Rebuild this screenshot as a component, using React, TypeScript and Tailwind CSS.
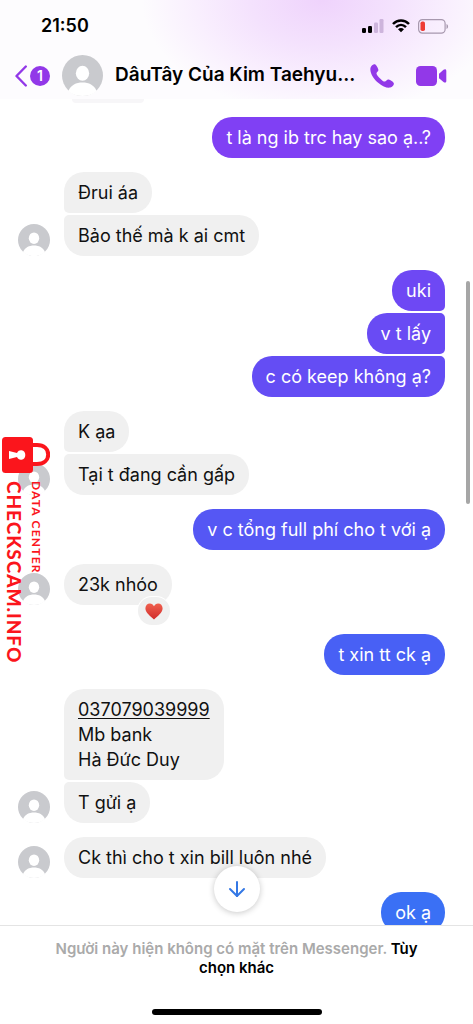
import { ArrowDown } from 'lucide-react';

type Message = {
  text: string;
  link?: string;
  color?: string;
  reaction?: string;
};

type Group = {
  from: 'me' | 'them';
  messages: Message[];
};

const groups: Group[] = [
  {
    from: 'me',
    messages: [{ text: 't là ng ib trc hay sao ạ..?', color: 'bg-[#8040f4]' }],
  },
  {
    from: 'them',
    messages: [{ text: 'Đrui áa' }, { text: 'Bảo thế mà k ai cmt' }],
  },
  {
    from: 'me',
    messages: [
      { text: 'uki', color: 'bg-[#6e48f4]' },
      { text: 'v t lấy', color: 'bg-[#694bf4]' },
      { text: 'c có keep không ạ?', color: 'bg-[#644df4]' },
    ],
  },
  {
    from: 'them',
    messages: [{ text: 'K ạa' }, { text: 'Tại t đang cần gấp' }],
  },
  {
    from: 'me',
    messages: [{ text: 'v c tổng full phí cho t với ạ', color: 'bg-[#5557f4]' }],
  },
  {
    from: 'them',
    messages: [{ text: '23k nhóo', reaction: '❤️' }],
  },
  {
    from: 'me',
    messages: [{ text: 't xin tt ck ạ', color: 'bg-[#4860f5]' }],
  },
  {
    from: 'them',
    messages: [
      { link: '037079039999', text: 'Mb bank\nHà Đức Duy' },
      { text: 'T gửi ạ' },
    ],
  },
  {
    from: 'them',
    messages: [{ text: 'Ck thì cho t xin bill luôn nhé' }],
  },
  {
    from: 'me',
    messages: [{ text: 'ok ạ', color: 'bg-[#3a70f5]' }],
  },
];

const Avatar = ({ className }: { className: string }) => (
  <svg viewBox="0 0 32 32" className={`shrink-0 ${className}`} aria-hidden="true">
    <circle cx="16" cy="16" r="16" fill="#c9cace" />
    <ellipse cx="16" cy="14.200" rx="5.200" ry="5.800" fill="#fff" />
    <path d="M5 28 C7 23.5 11 21.5 16 21.5 C21 21.5 25 23.5 27 28 C24.500 30.700 20.500 32 16 32 C11.500 32 7.500 30.700 5 28Z" fill="#fff" />
  </svg>
);

const StatusBar = () => (
  <div className="flex h-[52px] items-center justify-between pl-[41px] pr-6">
    <span className="text-lg font-semibold">21:50</span>
    <div className="flex items-center gap-2">
      <svg viewBox="0 0 22 14" className="h-[14px] w-[22px]" aria-hidden="true">
        <rect x="0" y="9" width="4" height="5" rx="1.2" fill="#000" />
        <rect x="6" y="7" width="4" height="7" rx="1.2" fill="#000" />
        <rect x="12" y="3.500" width="4" height="10.500" rx="1.200" fill="#cdb4dc" />
        <rect x="17.500" y="0" width="4" height="14" rx="1.200" fill="#cdb4dc" />
      </svg>
      <svg viewBox="0 0 18 14" className="h-[14px] w-[18px]" aria-hidden="true">
        <g fill="none" stroke="#000" strokeWidth="2.500">
          <path d="M1 5 C5.500 .4 12.500 .4 17 5" />
          <path d="M4 8.200 C7 5.300 11 5.300 14 8.200" />
        </g>
        <path d="M6 10.200 C7.800 8.700 10.200 8.700 12 10.200 L9 13.300Z" fill="#000" />
      </svg>
      <svg viewBox="0 0 31 15" className="h-[15px] w-[31px]" aria-hidden="true">
        <rect x=".6" y=".6" width="26.500" height="13.500" rx="3.800" fill="none" stroke="#a798ae" strokeWidth="1.200" />
        <rect x="2.500" y="2.500" width="4.500" height="9.500" rx="1.800" fill="#ee3b35" />
        <path d="M28.500 5 C30.600 5.700 30.600 9.300 28.500 10Z" fill="#a798ae" />
      </svg>
    </div>
  </div>
);

const ChatHeader = () => (
  <header className="h-[99px] shrink-0 bg-[radial-gradient(ellipse_180px_115px_at_68%_0%,#efd3fc,#f4e2fd_40%,#f9effe_70%,#fdfcfe)]">
    <StatusBar />
    <div className="flex h-[47px] items-center pl-[15px] pr-[26px]">
      <button type="button" aria-label="Back" className="flex shrink-0 items-center gap-[3px]">
        <svg viewBox="0 0 12 22" className="h-[22px] w-3" fill="none" stroke="#9238e8" strokeWidth="2.400" strokeLinecap="round" strokeLinejoin="round" aria-hidden="true">
          <path d="M10.800 1.500 L1.500 11 L10.800 20.500" />
        </svg>
        <span className="flex size-5 items-center justify-center rounded-full bg-[#9238e8] text-sm font-semibold text-white">
          1
        </span>
      </button>
      <Avatar className="ml-3 size-[41px]" />
      <h1 className="ml-3 flex-1 whitespace-nowrap text-[19px] font-semibold">
        DâuTây Của Kim Taehyu...
      </h1>
      <button type="button" aria-label="Call" className="shrink-0">
        <svg viewBox="0 0 24 24" className="size-6" aria-hidden="true">
          <path d="M4.900 .3 C3.300 -.2 .6 2.200 .4 4.600 C-.1 9.500 4 15.300 8.500 19 C12.500 22.300 17 24.300 20.200 23.600 C22.500 23.100 24.300 20.700 23.800 19.200 C23.500 18.100 20.200 15.900 18.700 15.600 C16.900 15.200 16.100 17.700 14.700 17.600 C12.600 17.400 6.700 11.600 6.500 9.400 C6.400 8.200 8.600 7.600 8.400 5.900 C8.200 4.400 6.300 .8 4.900 .3Z" fill="#9238e8" />
        </svg>
      </button>
      <button type="button" aria-label="Video call" className="ml-[22px] shrink-0">
        <svg viewBox="0 0 31 20" className="h-5 w-[31px]" fill="#9238e8" aria-hidden="true">
          <rect x="0" y="0" width="21" height="20" rx="4.500" />
          <path d="M23 7.800 L27.500 3.800 C29 2.700 30.300 3.200 30.300 4.800 V15 C30.300 16.600 29 17.100 27.500 16 L23 12.200Z" />
        </svg>
      </button>
    </div>
  </header>
);

// Bubbles of one sender share small corners on the side where they touch
const corners = (from: Group['from'], index: number, count: number) => {
  const first = index === 0;
  const last = index === count - 1;
  if (from === 'me') {
    return `${first ? '' : 'rounded-tr-[5px]'} ${last ? '' : 'rounded-br-[5px]'}`;
  }
  return `${first ? '' : 'rounded-tl-[5px]'} ${last ? '' : 'rounded-bl-[5px]'}`;
};

const MessageGroup = ({ from, messages }: Group) => {
  const mine = from === 'me';
  const reacted = messages.some((message) => message.reaction);

  return (
    <div
      className={`flex items-end gap-[14px] ${mine ? 'justify-end' : ''} ${reacted ? 'mb-[15px]' : ''}`}
    >
      {!mine && <Avatar className="size-8" />}
      <div className={`flex flex-col gap-[2px] ${mine ? 'items-end' : 'items-start'}`}>
        {messages.map((message, index) => (
          <div
            key={message.text}
            className={`relative whitespace-pre-line rounded-[20px] px-[14px] py-2 ${
              mine ? `text-white ${message.color}` : 'bg-[#f0f0f0] text-[#111]'
            } ${corners(from, index, messages.length)}`}
          >
            {message.link && (
              <a href={`tel:${message.link}`} className="block underline underline-offset-2">
                {message.link}
              </a>
            )}
            {message.text}
            {message.reaction && (
              <span className="absolute -bottom-5 right-[2px] flex h-7 w-8 items-center justify-center rounded-full bg-[#f0f0f0] ring-1 ring-white">
                <svg viewBox="0 0 18 17" className="h-[17px] w-[18px]" role="img" aria-label={message.reaction}>
                  <defs>
                    <linearGradient id="heart" x1="0" y1="0" x2="0" y2="1">
                      <stop offset="0" stopColor="#f0604e" />
                      <stop offset="1" stopColor="#d02c2c" />
                    </linearGradient>
                  </defs>
                  <path d="M9 16.600 C5.500 13.200 .4 9.800 .4 5.300 C.4 2.400 2.400 .4 4.900 .4 C6.700 .4 8.200 1.500 9 3.200 C9.800 1.500 11.300 .4 13.100 .4 C15.600 .4 17.600 2.400 17.600 5.300 C17.600 9.800 12.500 13.200 9 16.600Z" fill="url(#heart)" />
                </svg>
              </span>
            )}
          </div>
        ))}
      </div>
    </div>
  );
};

const Watermark = () => (
  <div className="pointer-events-none absolute left-[2px] top-[437px] text-[#fb151c]">
    <svg viewBox="0 0 48 36" className="h-9 w-12" aria-hidden="true">
      <path d="M29 8 H35 C42 8 46.200 12 46.200 17.500 C46.200 23 42 27 35 27 H29" fill="none" stroke="#fb151c" strokeWidth="4" />
      <rect x="0" y="0" width="31" height="36" rx="3.500" fill="#fb151c" />
      <path d="M7 14 L15 16 C16 13.500 18 13 19.500 13.200 C22 13.500 23.300 15.500 23.300 18 C23.300 20.500 22 22.300 19.500 22.700 C17.500 23 16 22 15 20 L7 22Z" fill="#fff" />
    </svg>
    <div className="mt-2 flex flex-row-reverse items-start justify-end gap-1 pl-[2px] font-['Lato']">
      <span className="text-xs font-bold leading-4 tracking-widest [writing-mode:vertical-rl]">
        DATA CENTER
      </span>
      <span className="text-[19px] font-black leading-5 tracking-wider [writing-mode:vertical-rl]">
        CHECKSCAM.INFO
      </span>
    </div>
  </div>
);

const App = () => (
  <div className="relative flex h-dvh flex-col overflow-hidden bg-white font-['Inter',sans-serif] text-black">
    <ChatHeader />
    <div className="relative flex min-h-0 flex-1 flex-col">
      <main className="flex min-h-0 flex-1 flex-col gap-[14px] overflow-hidden pl-[18px] pr-7 text-lg leading-[25px] *:shrink-0">
        <div className="ml-[54px] h-1 w-[72px] rounded-b-full bg-[#f7f6f8]" />
        {groups.map((group) => (
          <MessageGroup key={group.messages[0].text} {...group} />
        ))}
      </main>
      <div className="absolute right-[3px] top-[182px] h-[223px] w-1 rounded-full bg-[#a6a6a6]" />
      <button
        type="button"
        aria-label="Scroll to latest"
        className="absolute bottom-[13px] left-1/2 flex size-[46px] -translate-x-1/2 items-center justify-center rounded-full bg-white shadow-[0_1px_6px_rgba(0,0,0,0.22)]"
      >
        <ArrowDown className="size-6 text-[#3478e5]" strokeWidth={2} />
      </button>
    </div>
    <footer className="flex h-[99px] shrink-0 flex-col items-center justify-between border-t border-[#e4e4e4] px-12 pb-[9px] pt-[13px]">
      <p className="text-center text-[15px] font-semibold leading-[19px] text-[#aaa]">
        Người này hiện không có mặt trên Messenger.{' '}
        <a href="#options" className="text-black">
          Tùy
          <br />
          chọn khác
        </a>
      </p>
      <div className="h-[6px] w-[170px] rounded-full bg-black" />
    </footer>
    <Watermark />
  </div>
);

export default App;
